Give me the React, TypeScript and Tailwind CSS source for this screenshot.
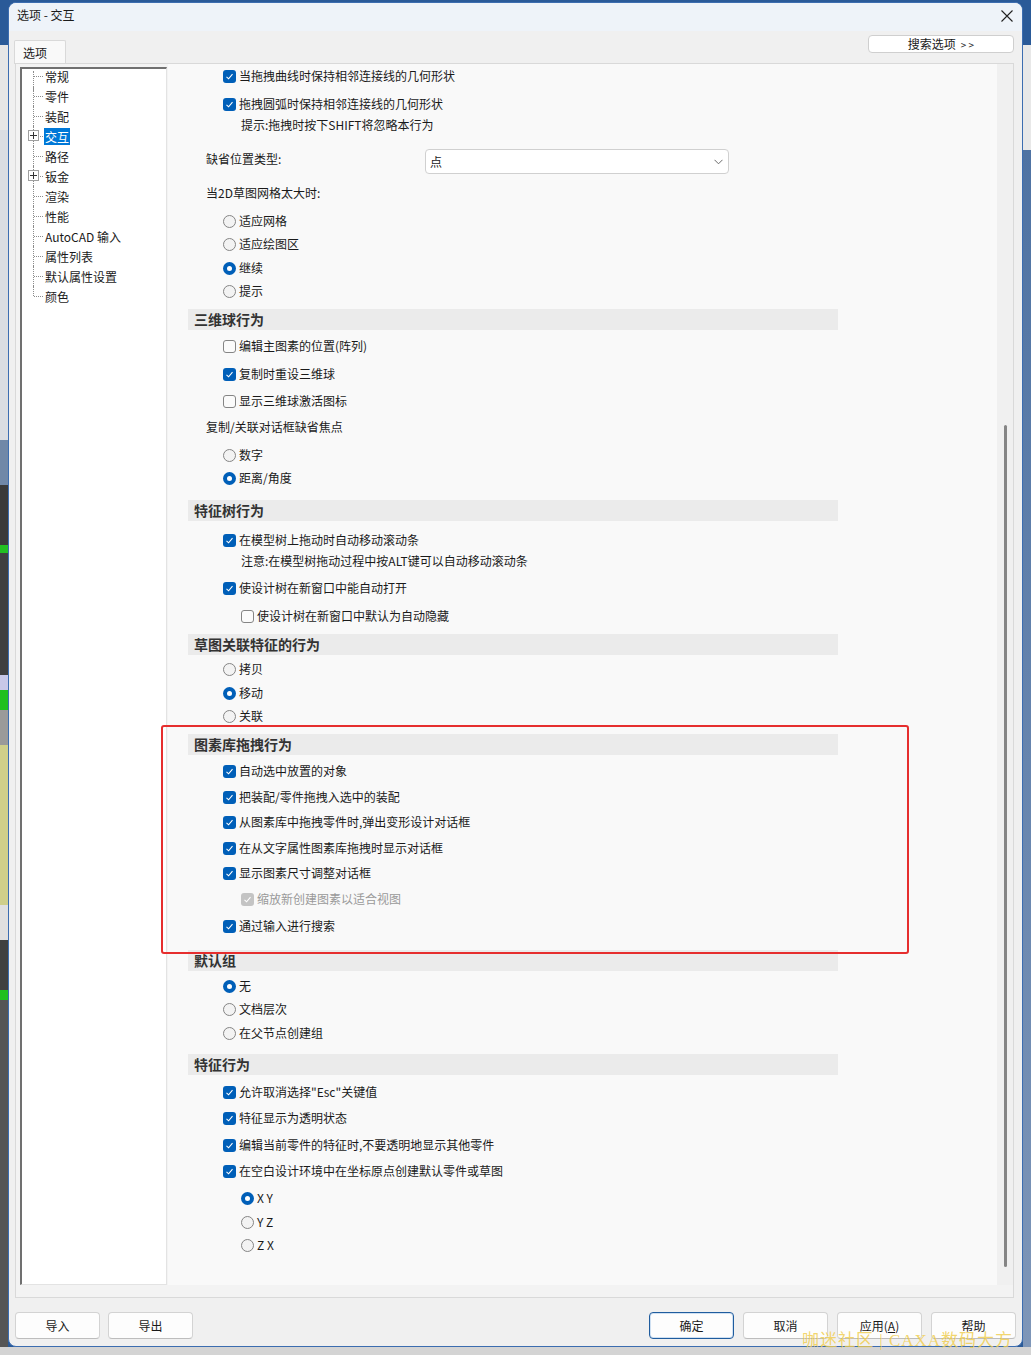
import React from "react";

type Row =
  | { k: "cb"; text: string; checked?: boolean; indent?: boolean; disabled?: boolean; mt: string }
  | { k: "rd"; text: string; checked?: boolean; indent?: boolean; mt: string }
  | { k: "hint"; text: string; mt: string }
  | { k: "label"; text: string; mt: string }
  | { k: "hdr"; text: string; mt: string }
  | { k: "combo"; mt: string };

const rows: Row[] = [
  { k: "cb", text: "当拖拽曲线时保持相邻连接线的几何形状", checked: true, mt: "mt-[2px]" },
  { k: "cb", text: "拖拽圆弧时保持相邻连接线的几何形状", checked: true, mt: "mt-[8px]" },
  { k: "hint", text: "提示:拖拽时按下SHIFT将忽略本行为", mt: "mt-[1px]" },
  { k: "combo", mt: "mt-[14px]" },
  { k: "label", text: "当2D草图网格太大时:", mt: "mt-[9px]" },
  { k: "rd", text: "适应网格", mt: "mt-[8px]" },
  { k: "rd", text: "适应绘图区", mt: "mt-[3px]" },
  { k: "rd", text: "继续", checked: true, mt: "mt-[4px]" },
  { k: "rd", text: "提示", mt: "mt-[3px]" },
  { k: "hdr", text: "三维球行为", mt: "mt-[8px]" },
  { k: "cb", text: "编辑主图素的位置(阵列)", mt: "mt-[6px]" },
  { k: "cb", text: "复制时重设三维球", checked: true, mt: "mt-[8px]" },
  { k: "cb", text: "显示三维球激活图标", mt: "mt-[7px]" },
  { k: "label", text: "复制/关联对话框缺省焦点", mt: "mt-[6px]" },
  { k: "rd", text: "数字", mt: "mt-[8px]" },
  { k: "rd", text: "距离/角度", checked: true, mt: "mt-[3px]" },
  { k: "hdr", text: "特征树行为", mt: "mt-[12px]" },
  { k: "cb", text: "在模型树上拖动时自动移动滚动条", checked: true, mt: "mt-[9px]" },
  { k: "hint", text: "注意:在模型树拖动过程中按ALT键可以自动移动滚动条", mt: "mt-[1px]" },
  { k: "cb", text: "使设计树在新窗口中能自动打开", checked: true, mt: "mt-[7px]" },
  { k: "cb", text: "使设计树在新窗口中默认为自动隐藏", indent: true, mt: "mt-[8px]" },
  { k: "hdr", text: "草图关联特征的行为", mt: "mt-[8px]" },
  { k: "rd", text: "拷贝", mt: "mt-[4px]" },
  { k: "rd", text: "移动", checked: true, mt: "mt-[4px]" },
  { k: "rd", text: "关联", mt: "mt-[3px]" },
  { k: "hdr", text: "图素库拖拽行为", mt: "mt-[8px]" },
  { k: "cb", text: "自动选中放置的对象", checked: true, mt: "mt-[6px]" },
  { k: "cb", text: "把装配/零件拖拽入选中的装配", checked: true, mt: "mt-[6px]" },
  { k: "cb", text: "从图素库中拖拽零件时,弹出变形设计对话框", checked: true, mt: "mt-[5px]" },
  { k: "cb", text: "在从文字属性图素库拖拽时显示对话框", checked: true, mt: "mt-[6px]" },
  { k: "cb", text: "显示图素尺寸调整对话框", checked: true, mt: "mt-[5px]" },
  { k: "cb", text: "缩放新创建图素以适合视图", checked: true, disabled: true, indent: true, mt: "mt-[6px]" },
  { k: "cb", text: "通过输入进行搜索", checked: true, mt: "mt-[7px]" },
  { k: "hdr", text: "默认组", mt: "mt-[14px]" },
  { k: "rd", text: "无", checked: true, mt: "mt-[5px]" },
  { k: "rd", text: "文档层次", mt: "mt-[3px]" },
  { k: "rd", text: "在父节点创建组", mt: "mt-[4px]" },
  { k: "hdr", text: "特征行为", mt: "mt-[11px]" },
  { k: "cb", text: '允许取消选择"Esc"关键值', checked: true, mt: "mt-[7px]" },
  { k: "cb", text: "特征显示为透明状态", checked: true, mt: "mt-[6px]" },
  { k: "cb", text: "编辑当前零件的特征时,不要透明地显示其他零件", checked: true, mt: "mt-[7px]" },
  { k: "cb", text: "在空白设计环境中在坐标原点创建默认零件或草图", checked: true, mt: "mt-[6px]" },
  { k: "rd", text: "X Y", checked: true, indent: true, mt: "mt-[7px]" },
  { k: "rd", text: "Y Z", indent: true, mt: "mt-[4px]" },
  { k: "rd", text: "Z X", indent: true, mt: "mt-[3px]" },
];

const treeItems: { label: string; expand?: boolean; selected?: boolean }[] = [
  { label: "常规" },
  { label: "零件" },
  { label: "装配" },
  { label: "交互", expand: true, selected: true },
  { label: "路径" },
  { label: "钣金", expand: true },
  { label: "渲染" },
  { label: "性能" },
  { label: "AutoCAD 输入" },
  { label: "属性列表" },
  { label: "默认属性设置" },
  { label: "颜色" },
];

function CheckMark({ color = "#ffffff" }: { color?: string }) {
  return (
    <svg width="9" height="9" viewBox="0 0 9 9">
      <polyline points="1.5,4.8 3.6,6.8 7.5,2.2" fill="none" stroke={color} strokeWidth="1.1" />
    </svg>
  );
}

function Checkbox({ checked, disabled }: { checked?: boolean; disabled?: boolean }) {
  if (checked && disabled)
    return (
      <span className="flex h-[13px] w-[13px] shrink-0 items-center justify-center rounded-[3px] bg-[#c4c4c4]">
        <CheckMark />
      </span>
    );
  if (checked)
    return (
      <span className="flex h-[13px] w-[13px] shrink-0 items-center justify-center rounded-[3px] bg-[#005fb8]">
        <CheckMark />
      </span>
    );
  return <span className="h-[13px] w-[13px] shrink-0 rounded-[3px] border border-[#858585] bg-[#fbfbfb]" />;
}

function Radio({ checked }: { checked?: boolean }) {
  if (checked)
    return (
      <span className="flex h-[13px] w-[13px] shrink-0 items-center justify-center rounded-full bg-[#005fb8]">
        <span className="h-[5px] w-[5px] rounded-full bg-white" />
      </span>
    );
  return <span className="h-[13px] w-[13px] shrink-0 rounded-full border border-[#858585] bg-[#f3f3f3]" />;
}

function ContentRow({ r }: { r: Row }) {
  if (r.k === "hdr")
    return (
      <div className={`${r.mt} ml-[20px] flex h-[21px] w-[650px] items-center bg-[#ebebeb] pl-[6px] text-[14px] font-bold text-[#333333]`}>
        {r.text}
      </div>
    );
  if (r.k === "hint")
    return (
      <div className={`${r.mt} flex h-[20px] items-center pl-[73px] text-[12px] text-[#1a1a1a]`}>{r.text}</div>
    );
  if (r.k === "label")
    return (
      <div className={`${r.mt} flex h-[20px] items-center pl-[38px] text-[12px] text-[#1a1a1a]`}>{r.text}</div>
    );
  if (r.k === "combo")
    return (
      <div className={`${r.mt} flex h-[25px] items-start`}>
        <div className="flex h-[20px] w-[257px] items-center pl-[38px] text-[12px] text-[#1a1a1a]">缺省位置类型:</div>
        <div className="flex h-[25px] w-[304px] items-center justify-between rounded-[4px] border border-[#d0d0d0] bg-white pl-[4px] pr-[5px] text-[12px] text-[#1a1a1a]">
          <span>点</span>
          <svg width="9" height="6" viewBox="0 0 9 6">
            <polyline points="0.5,0.8 4.5,4.8 8.5,0.8" fill="none" stroke="#6b6b6b" strokeWidth="1" />
          </svg>
        </div>
      </div>
    );
  const pad = r.indent ? "pl-[73px]" : "pl-[55px]";
  return (
    <div className={`${r.mt} flex h-[20px] items-center ${pad} gap-[3px] text-[12px]`}>
      {r.k === "cb" ? <Checkbox checked={r.checked} disabled={r.disabled} /> : <Radio checked={r.checked} />}
      <span className={r.k === "cb" && r.disabled ? "text-[#9a9a9a]" : "text-[#1a1a1a]"}>{r.text}</span>
    </div>
  );
}

function Button({ children, primary }: { children: React.ReactNode; primary?: boolean }) {
  return (
    <div
      className={`flex h-[27px] w-[85px] items-center justify-center rounded-[4px] bg-[#fdfdfd] text-[12px] text-[#1a1a1a] ${
        primary ? "border border-[#1f5c9e] shadow-[inset_0_0_0_1px_#cfe0f2]" : "border border-[#d3d3d3] border-b-[#bdbdbd]"
      }`}
    >
      {children}
    </div>
  );
}

export default function App() {
  return (
    <div className="relative h-[1355px] w-[1031px] overflow-hidden bg-[#d4d4d4] font-['Noto_Sans_CJK_SC','Liberation_Sans',sans-serif]">
      <div className="flex h-[1347px] bg-[#2a5a98]">
        {/* left background strip */}
        <div className="flex w-[8px] flex-col">
          <div className="h-[45px] bg-[#2a5a98]" />
          <div className="h-[85px] bg-[#e6e6e6]" />
          <div className="h-[310px] bg-[#dadde2]" />
          <div className="h-[45px] bg-[#7088a8]" />
          <div className="h-[60px] bg-[#3a3a3a]" />
          <div className="h-[8px] bg-[#22c022]" />
          <div className="h-[122px] bg-[#3f3f3f]" />
          <div className="h-[15px] bg-[#c8c8e8]" />
          <div className="h-[20px] bg-[#20c020]" />
          <div className="h-[35px] bg-[#9a9a9a]" />
          <div className="h-[160px] bg-[#cfcf8a]" />
          <div className="h-[35px] bg-[#e0e0e0]" />
          <div className="h-[50px] bg-[#404040]" />
          <div className="h-[10px] bg-[#20c020]" />
          <div className="flex-1 bg-[#555555]" />
        </div>

        {/* dialog */}
        <div className="mt-[2px] flex w-[1015px] flex-col overflow-hidden rounded-[8px] border border-[#3c6db0] bg-[#f0f0f0]">
          {/* title bar */}
          <div className="flex h-[28px] items-start justify-between bg-[#eef3f9] pl-[8px] pr-[9px] pt-[3px]">
            <span className="text-[12px] leading-[18px] text-[#1a1a1a]">选项 - 交互</span>
            <svg className="mt-[4px]" width="12" height="12" viewBox="0 0 12 12">
              <path d="M0.5 0.5 L11.5 11.5 M11.5 0.5 L0.5 11.5" stroke="#222" strokeWidth="1.1" />
            </svg>
          </div>

          {/* tab row */}
          <div className="flex h-[32px] items-start justify-between">
            <div className="ml-[5px] mt-[9px] flex h-[24px] w-[52px] items-center rounded-t-[2px] border border-b-0 border-[#d9d9d9] bg-[#f9f9f9] pl-[8px] text-[12px] text-[#1a1a1a]">
              选项
            </div>
            <div className="mr-[8px] mt-[4px] flex h-[18px] w-[146px] items-center justify-center gap-[5px] rounded-[4px] border border-[#cfcfcf] bg-white text-[12px] text-[#1a1a1a]">
              <span>搜索选项</span>
              <span className="text-[10px]">&gt; &gt;</span>
            </div>
          </div>

          {/* panel */}
          <div className="ml-[6px] mr-[8px] flex h-[1235px] border border-[#d9d9d9] bg-[#f3f3f3] pb-[12px]">
            {/* tree */}
            <div className="ml-[4px] mt-[3px] w-[147px] border-b border-l-2 border-r border-t-2 border-b-[#e3e3e3] border-l-[#707070] border-r-[#e3e3e3] border-t-[#707070] bg-white">
              <div className="-mt-[3px] flex flex-col">
                {treeItems.map((t, i) => (
                  <div key={t.label} className="flex h-[20px] items-center">
                    <div className="w-[11px]" />
                    <div className="relative h-full w-[10px]">
                      <div
                        className={`absolute left-0 top-0 border-l border-dotted border-[#8c8c8c] ${
                          i === treeItems.length - 1 ? "h-[10px]" : "h-[20px]"
                        } ${i === 0 ? "top-[5px] h-[15px]" : ""}`}
                      />
                      <div className="absolute left-[1px] top-[10px] w-[9px] border-t border-dotted border-[#8c8c8c]" />
                      {t.expand && (
                        <div className="absolute left-[-5px] top-[4px] flex h-[11px] w-[11px] items-center justify-center border border-[#a0a0a0] bg-white">
                          <svg width="7" height="7" viewBox="0 0 7 7">
                            <path d="M0 3.5 H7 M3.5 0 V7" stroke="#333" strokeWidth="1" />
                          </svg>
                        </div>
                      )}
                    </div>
                    <span
                      className={`ml-[1px] px-[1px] text-[12px] leading-[17px] ${
                        t.selected ? "bg-[#0078d7] text-white" : "text-[#1a1a1a]"
                      }`}
                    >
                      {t.label}
                    </span>
                  </div>
                ))}
              </div>
            </div>

            {/* content */}
            <div className="ml-[1px] flex flex-1 bg-[#f9f9f9]">
              <div className="flex flex-1 flex-col">
                {rows.map((r, i) => (
                  <ContentRow key={i} r={r} />
                ))}
              </div>
              <div className="flex w-[16px] flex-col items-center bg-[#f0f0f0]">
                <div className="mt-[361px] h-[842px] w-[3px] rounded-full bg-[#858585]" />
              </div>
            </div>
          </div>

          {/* buttons */}
          <div className="mt-[14px] flex items-center justify-between pl-[6px] pr-[6px]">
            <div className="flex gap-[8px]">
              <Button>导入</Button>
              <Button>导出</Button>
            </div>
            <div className="flex gap-[9px]">
              <Button primary>确定</Button>
              <Button>取消</Button>
              <Button>
                应用(<span className="underline">A</span>)
              </Button>
              <Button>帮助</Button>
            </div>
          </div>
        </div>

        {/* right background strip */}
        <div className="flex w-[8px] flex-col">
          <div className="h-[45px] bg-[#2a5a98]" />
          <div className="h-[105px] bg-[#e8e8e8]" />
          <div className="flex-1 bg-gradient-to-b from-[#4f73a3] to-[#7e96b8]" />
        </div>
      </div>

      {/* red annotation rectangle */}
      <div className="pointer-events-none absolute left-[161px] top-[725px] h-[229px] w-[748px] rounded-[3px] border-2 border-[#e62e2e]" />

      {/* watermark */}
      <div className="pointer-events-none absolute left-[802px] top-[1328px] whitespace-nowrap font-['Liberation_Serif','Noto_Sans_CJK_SC',serif] text-[17px] tracking-[1px] text-[#f0cc48]/80">
        咖迷社区 | CAXA数码大方
      </div>
    </div>
  );
}
